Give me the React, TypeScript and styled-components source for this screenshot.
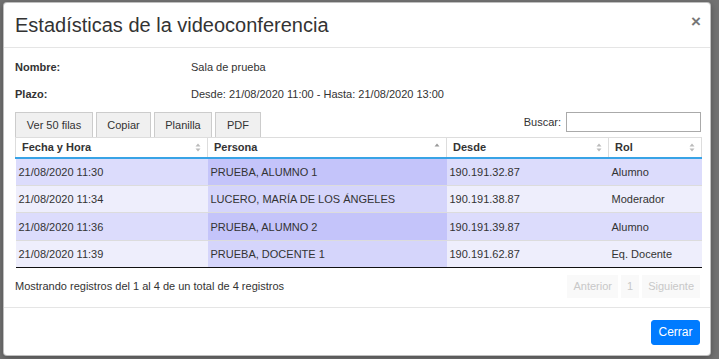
import { Component, ReactNode } from "react"
import styled, { createGlobalStyle } from "styled-components"

const Global = createGlobalStyle`
	html, body {
		margin: 0;
		padding: 0;
		background: #707070;
		overflow: hidden;
	}
	body {
		font-family: "Liberation Sans", Arial, sans-serif;
		color: #333;
	}
`

type Row = { fecha: string; persona: string; desde: string; rol: string }

const rows: Row[] = [
	{ fecha: "21/08/2020 11:30", persona: "PRUEBA, ALUMNO 1", desde: "190.191.32.87", rol: "Alumno" },
	{ fecha: "21/08/2020 11:34", persona: "LUCERO, MARÍA DE LOS ÁNGELES", desde: "190.191.38.87", rol: "Moderador" },
	{ fecha: "21/08/2020 11:36", persona: "PRUEBA, ALUMNO 2", desde: "190.191.39.87", rol: "Alumno" },
	{ fecha: "21/08/2020 11:39", persona: "PRUEBA, DOCENTE 1", desde: "190.191.62.87", rol: "Eq. Docente" },
]

const S = {
	Backdrop: styled.div`
		width: 719px;
		height: 359px;
		box-sizing: border-box;
		padding: 2px 8px 3px 3px;
		display: flex;
		background: #727272;
	`,
	Modal: styled.div`
		flex: 1;
		min-width: 0;
		display: flex;
		flex-direction: column;
		background: #fff;
		border: 1px solid rgba(0, 0, 0, 0.25);
		border-radius: 4px;
		box-shadow: 0 2px 6px rgba(0, 0, 0, 0.3);
		overflow: hidden;
	`,
	Header: styled.div`
		flex-shrink: 0;
		display: flex;
		justify-content: space-between;
		align-items: center;
		height: 44px;
		padding: 0 11px;
		border-bottom: 1px solid #e5e5e5;
		h4 {
			margin: 0;
			font-size: 20px;
			font-weight: 400;
			color: #333;
		}
	`,
	Close: styled.span`
		font-size: 17px;
		font-weight: 700;
		color: #777;
		line-height: 1;
		margin-right: -2px;
		margin-top: -7px;
	`,
	Body: styled.div`
		padding: 5px 10px 0 11px;
		font-size: 11px;
	`,
	Info: styled.div`
		display: grid;
		grid-template-columns: 176px 1fr;
		height: 27px;
		align-items: center;
		b {
			font-weight: 700;
		}
	`,
	Toolbar: styled.div`
		display: flex;
		align-items: flex-start;
		margin-top: 5px;
		height: 25px;
	`,
	Buttons: styled.div`
		display: flex;
		gap: 3px;
		flex: 1;
	`,
	ToolBtn: styled.button<{ $w: number }>`
		width: ${p => p.$w}px;
		height: 26px;
		font: 11px "Liberation Sans", Arial, sans-serif;
		color: #333;
		background: #f0f0f0;
		border: 1px solid #ccc;
		border-radius: 0;
		padding: 0;
	`,
	Search: styled.label`
		display: flex;
		align-items: center;
		gap: 5px;
		height: 20px;
		input {
			width: 135px;
			box-sizing: border-box;
			height: 20px;
			border: 1px solid #aaa;
			padding: 0 3px;
			margin: 0 -1px 0 0;
		}
	`,
	Table: styled.table`
		width: 686px;
		border-collapse: collapse;
		table-layout: fixed;
		border-bottom: 1px solid #111;
		position: relative;
	`,
	Th: styled.th<{ $w: number }>`
		box-sizing: border-box;
		width: ${p => p.$w}px;
		height: 20px;
		padding: 0 6px;
		text-align: left;
		font-weight: 700;
		font-size: 11px;
		border-top: 1px solid #ddd;
		border-left: 1px solid #ddd;
		border-bottom: 2px solid #38a3e6;
		background: #fff;
		&:last-child {
			border-right: 1px solid #ddd;
		}
		.in {
			display: flex;
			justify-content: space-between;
			align-items: center;
		}
	`,
	Tr: styled.tr<{ $odd: boolean }>`
		td {
			height: ${p => (p.$odd ? 28 : 27)}px;
			background: ${p => (p.$odd ? "#dcdcfc" : "#eeeefc")};
		}
		td.sorted {
			background: ${p => (p.$odd ? "#c4c4fa" : "#d5d5fb")};
		}
	`,
	Td: styled.td`
		box-sizing: border-box;
		padding: 0 4px 0 3px;
		font-size: 11px;
		border-top: 1px solid #dcdcdc;
		white-space: nowrap;
		overflow: hidden;
	`,
	Bottom: styled.div`
		display: flex;
		justify-content: space-between;
		align-items: center;
		padding-top: 6px;
		height: 24px;
	`,
	Pager: styled.div`
		display: flex;
		gap: 3px;
	`,
	PageBtn: styled.span`
		display: inline-flex;
		align-items: center;
		height: 23px;
		padding: 0 6px;
		background: #f9f9f9;
		color: #c8c8c8;
		font-size: 11px;
	`,
	Footer: styled.div`
		flex-shrink: 0;
		margin-top: auto;
		display: flex;
		justify-content: flex-end;
		align-items: center;
		height: 47px;
		padding: 0 10px;
		border-top: 1px solid #e5e5e5;
	`,
	Primary: styled.button`
		width: 49px;
		height: 25px;
		background: #007bff;
		border: 1px solid #007bff;
		border-radius: 3px;
		color: #fff;
		font: 12px "Liberation Sans", Arial, sans-serif;
		padding: 0;
		margin-top: 1px;
	`,
}

const SortIcon = ({ dir }: { dir?: "asc" }) => (
	<svg width="6" height="9" viewBox="0 0 6 9">
		<path d="M3 0.5 L5.5 3.5 L0.5 3.5 Z" fill={dir === "asc" ? "#999" : "#bbb"} />
		{dir !== "asc" && <path d="M3 8.5 L5.5 5.5 L0.5 5.5 Z" fill="#bbb" />}
	</svg>
)

class App extends Component {
	render(): ReactNode {
		return (
			<S.Backdrop>
				<Global />
				<S.Modal>
					<S.Header>
						<h4>Estadísticas de la videoconferencia</h4>
						<S.Close>×</S.Close>
					</S.Header>
					<S.Body>
						<S.Info>
							<b>Nombre:</b>
							<span>Sala de prueba</span>
						</S.Info>
						<S.Info>
							<b>Plazo:</b>
							<span>Desde: 21/08/2020 11:00 - Hasta: 21/08/2020 13:00</span>
						</S.Info>
						<S.Toolbar>
							<S.Buttons>
								<S.ToolBtn $w={78}>Ver 50 filas</S.ToolBtn>
								<S.ToolBtn $w={55}>Copiar</S.ToolBtn>
								<S.ToolBtn $w={58}>Planilla</S.ToolBtn>
								<S.ToolBtn $w={46}>PDF</S.ToolBtn>
							</S.Buttons>
							<S.Search>
								Buscar:
								<input type="text" />
							</S.Search>
						</S.Toolbar>
						<S.Table>
							<thead>
								<tr>
									<S.Th $w={192}>
										<div className="in">Fecha y Hora <SortIcon /></div>
									</S.Th>
									<S.Th $w={239}>
										<div className="in">Persona <SortIcon dir="asc" /></div>
									</S.Th>
									<S.Th $w={162}>
										<div className="in">Desde <SortIcon /></div>
									</S.Th>
									<S.Th $w={93}>
										<div className="in">Rol <SortIcon /></div>
									</S.Th>
								</tr>
							</thead>
							<tbody>
								{rows.map((r, i) => (
									<S.Tr key={r.fecha} $odd={i % 2 === 0}>
										<S.Td>{r.fecha}</S.Td>
										<S.Td className="sorted">{r.persona}</S.Td>
										<S.Td>{r.desde}</S.Td>
										<S.Td>{r.rol}</S.Td>
									</S.Tr>
								))}
							</tbody>
						</S.Table>
						<S.Bottom>
							<span>Mostrando registros del 1 al 4 de un total de 4 registros</span>
							<S.Pager>
								<S.PageBtn>Anterior</S.PageBtn>
								<S.PageBtn>1</S.PageBtn>
								<S.PageBtn>Siguiente</S.PageBtn>
							</S.Pager>
						</S.Bottom>
					</S.Body>
					<S.Footer>
						<S.Primary>Cerrar</S.Primary>
					</S.Footer>
				</S.Modal>
			</S.Backdrop>
		)
	}
}

export default App
